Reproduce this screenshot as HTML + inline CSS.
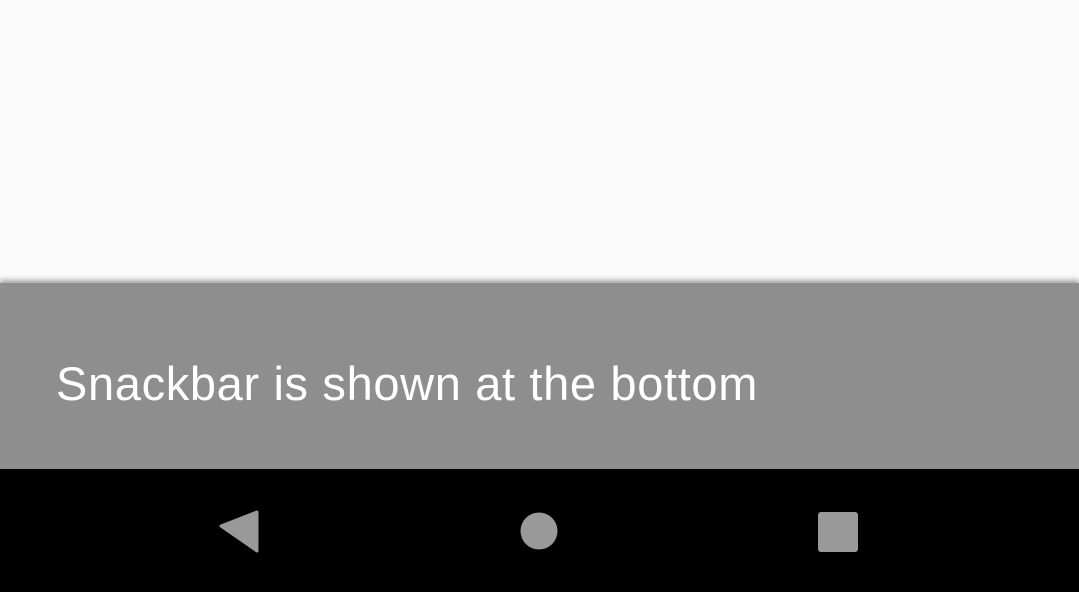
<!DOCTYPE html>
<html><head><style>
html,body{margin:0;padding:0;width:1079px;height:592px;overflow:hidden;background:#fafafa;font-family:"Liberation Sans",sans-serif}
.sb{position:absolute;left:0;top:283px;width:1079px;height:186px;background:#8e8e8e;box-shadow:0 -3px 5px rgba(0,0,0,0.35)}
.t{position:absolute;left:56px;top:354px;font-size:47px;color:#fff;white-space:nowrap;line-height:60px;letter-spacing:0.65px}
.nav{position:absolute;left:0;top:469px;width:1079px;height:123px;background:#000}
</style></head><body>
<div class="sb"></div>
<div class="t">Snackbar is shown at the bottom</div>
<div class="nav">
<svg width="1079" height="123" style="position:absolute;left:0;top:0">
<path d="M257 43 L257 82 L221 57Z" fill="#999" stroke="#999" stroke-width="3" stroke-linejoin="round"/>
<circle cx="539" cy="62" r="18.5" fill="#999"/>
<rect x="818" y="43" width="40" height="40" rx="3" fill="#999"/>
</svg>
</div>
</body></html>
